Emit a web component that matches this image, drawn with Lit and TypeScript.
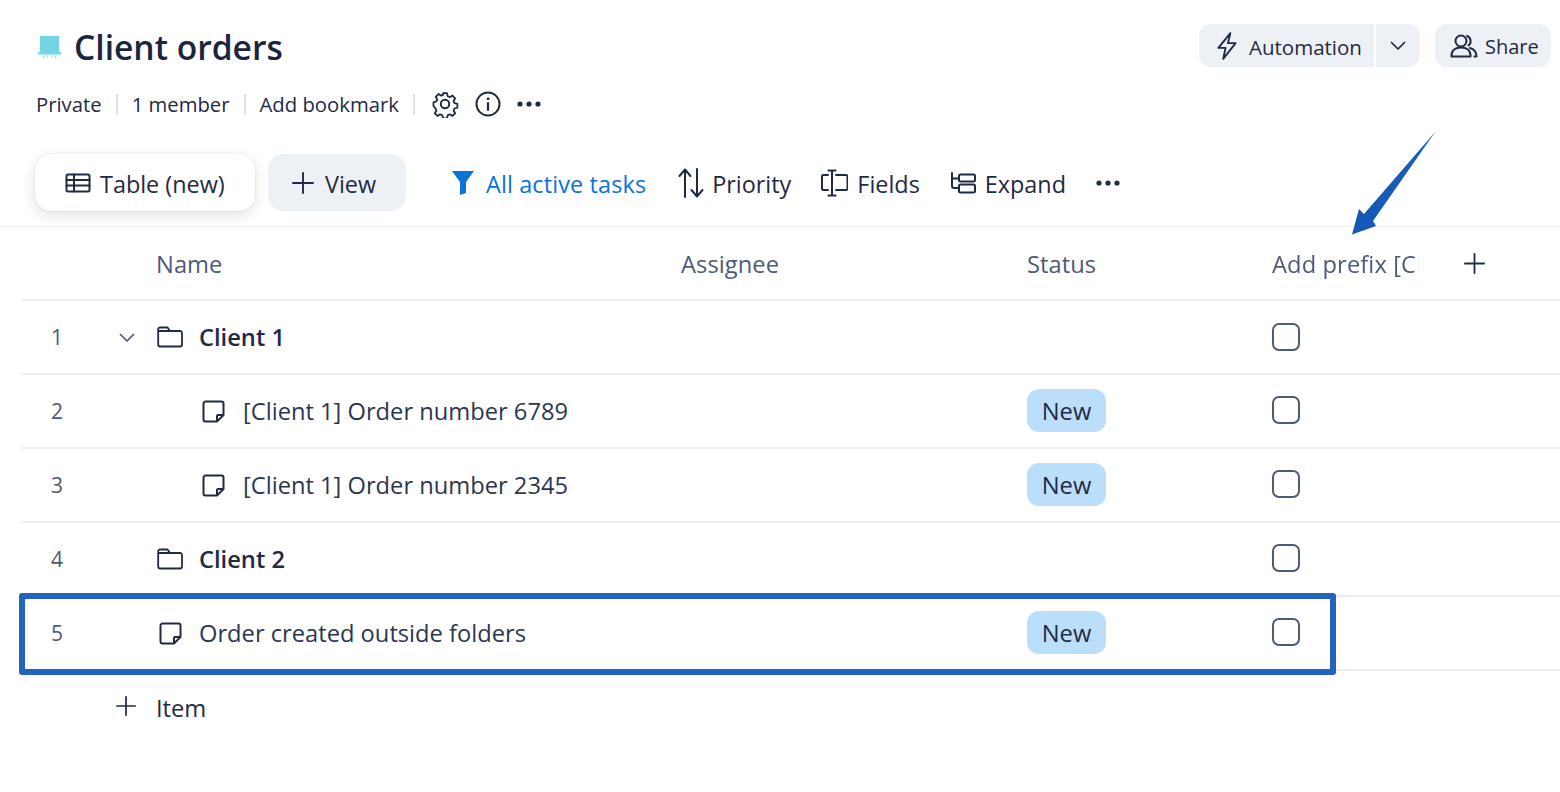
import { LitElement, html, css, svg } from "lit";
import { customElement } from "lit/decorators.js";

const ic = (w: number, h: number, vb: string, body: unknown, cls = "") =>
  html`<svg class="ic ${cls}" width=${w} height=${h} viewBox=${vb} fill="none" stroke="currentColor" stroke-linecap="round" stroke-linejoin="round">${body}</svg>`;

const plus = (s = 22) => ic(s, s, "0 0 22 22", svg`<path d="M11 1v20M1 11h20" stroke-width="1.900"/>`);
const chevron = (w = 16) => ic(w, 10, "0 0 16 10", svg`<path d="M1.500 1.500 8 8l6.500-6.500" stroke-width="1.700"/>`);
const dots = () => html`<svg class="ic" width="24" height="6" viewBox="0 0 24 6" fill="currentColor"><circle cx="3" cy="3" r="2.600"/><circle cx="12" cy="3" r="2.600"/><circle cx="21" cy="3" r="2.600"/></svg>`;
const note = () => ic(23, 23, "0 0 23 23", svg`<path d="M15 21.500H3.500a2 2 0 0 1-2-2V3.500a2 2 0 0 1 2-2h16a2 2 0 0 1 2 2V15ZM21.500 15H16a1 1 0 0 0-1 1v5.500" stroke-width="2"/>`);
const folder = () => ic(26, 22, "0 0 26 22", svg`<path d="M1.200 4V18.500a2 2 0 0 0 2 2H23a2 2 0 0 0 2-2V7a2 2 0 0 0-2-2H13L10.500 1.500H3.200a2 2 0 0 0-2 2.500ZM1.200 5H13" stroke-width="1.800"/>`);
const gear = () => ic(28, 28, "0 0 28 28", svg`<circle cx="14" cy="14" r="4.200" stroke-width="2"/><path d="M11.800 2h4.400l.8 3.400 2.300 1 3-1.800 3 3.100-1.800 3 1 2.200 3.300.9v4.300l-3.300.9-1 2.300 1.800 3-3 3-3-1.800-2.300 1-.8 3.400h-4.400l-.8-3.400-2.300-1-3 1.800-3-3 1.800-3-1-2.300L1.200 16.400v-4.300l3.300-.9 1-2.200-1.800-3 3-3.100 3 1.800 2.300-1Z" stroke-width="2" transform="translate(1.400 1.400) scale(.9)"/>`);

const rows = [
  { n: 1, kind: "folder", name: "Client 1", open: true },
  { n: 2, kind: "note", name: "[Client 1] Order number 6789", status: "New", indent: true },
  { n: 3, kind: "note", name: "[Client 1] Order number 2345", status: "New", indent: true },
  { n: 4, kind: "folder", name: "Client 2" },
  { n: 5, kind: "note", name: "Order created outside folders", status: "New" },
];

@customElement("app-root")
export class AppRoot extends LitElement {
  static styles = css`
    :host { display: block; position: relative; width: 1560px; height: 792px; overflow: hidden; background: #fff; color: #1f2a44;
      font-family: "Open Sans", "Noto Sans", sans-serif; font-size: 23.700px; }
    * { box-sizing: border-box; }
    .ic { display: block; flex: none; }
    .top { display: flex; justify-content: space-between; align-items: flex-start; padding: 24px 9px 0 36px; height: 68px; }
    .title { display: flex; align-items: center; gap: 12px; height: 46px; }
    .title h1 { margin: 0; font-size: 33.600px; font-weight: 600; line-height: 46px; color: #1b2540; }
    .actions { display: flex; gap: 15px; }
    .btn { display: flex; align-items: center; height: 43px; background: #edf0f5; font-size: 20.500px; }
    .btn span { padding-top: 2px; }
    .auto { gap: 11px; padding: 0 0 0 17px; border-radius: 12px 0 0 12px; width: 175px; margin-left: 1px; }
    .caret { width: 44px; justify-content: center; margin-left: 2px; border-radius: 0 12px 12px 0; }
    .split { display: flex; }
    .share { gap: 7px; padding: 0 0 0 15px; border-radius: 12px; width: 116px; font-size: 20px; }
    .meta { display: flex; align-items: center; padding-left: 36px; height: 36px; margin-top: 18px; font-size: 20.300px; }
    .meta .sep { width: 2px; height: 21px; background: #dbe0ea; margin: 0 14px; }
    .meta .tools { display: flex; align-items: center; gap: 16px; margin-left: 2px; }
    .tabs { display: flex; align-items: center; padding: 0 0 0 35px; margin-top: 32px; height: 57px; font-size: 23.400px; }
    .tabs span { padding-top: 2px; }
    .tab { display: flex; align-items: center; height: 57px; border-radius: 16px; }
    .tab.on { width: 220px; gap: 9px; padding-left: 30px; box-shadow: 0 4px 14px rgba(30,40,70,.14), 0 0 2px rgba(30,40,70,.12); }
    .tab.add { width: 138px; gap: 11px; padding-left: 24px; background: #edf0f5; margin-left: 13px; }
    .tool { display: flex; align-items: center; gap: 9px; margin-left: 30px; }
    .filter { color: #0a73db; margin-left: 46px; gap: 12px; letter-spacing: .14px; }
    .tool.prio { margin-left: 32px; gap: 8px; }
    .table { margin-top: 15px; border-top: 1px solid #eff1f5; }
    .row { display: grid; grid-template-columns: 135px 525px 346px 245px 1fr; align-items: center; height: 74px; margin-left: 21px; border-bottom: 2px solid #eceef2; }
    .row.head { color: #4d5b78; padding-top: 2px; letter-spacing: .06px; }
    .prefix { display: flex; align-items: center; }
    .prefix .ic { color: #1f2a44; margin: 0 0 2px 45px; }
    .clip { width: 147px; overflow: hidden; white-space: nowrap; letter-spacing: .1px; -webkit-mask-image: linear-gradient(90deg, #000 96%, transparent); mask-image: linear-gradient(90deg, #000 96%, transparent); }
    .num { display: flex; align-items: center; color: #4d5b78; font-size: 21px; padding-left: 30px; position: relative; height: 100%; }
    .expander { position: absolute; left: 98px; top: 32px; }
    .name { display: flex; align-items: center; gap: 17px; padding-left: 3px; white-space: nowrap; color: #2c3650; }
    .name.folder { gap: 16px; padding-left: 1px; font-weight: 600; color: #1f2a44; }
    .name.indent { padding-left: 46px; gap: 18px; }
    .name .ic { color: #1f2a44; }
    .pill { display: flex; align-items: center; justify-content: center; width: 79px; height: 43px; margin-bottom: 2px; padding-top: 2px; border-radius: 12px; background: #bbdffb; }
    .box { width: 28px; height: 28px; border: 2px solid #4d5b78; border-radius: 7px; }
    .row + .row + .row .box { margin-bottom: 2px; }
    .add-item { display: flex; align-items: center; gap: 20px; padding: 0 0 2px 116px; height: 76px; }
    .add-item .ic { margin-top: -4px; }
    .highlight { position: absolute; left: 19px; top: 593px; width: 1317px; height: 82px; border: 6px solid #2163bf; border-radius: 3px; pointer-events: none; }
    .arrow { position: absolute; left: 1345px; top: 125px; }
  `;

  render() {
    return html`
      <div class="top">
        <div class="title">
          <svg class="ic" width="26" height="26" viewBox="0 0 26 26">
            <rect x="4" y="2" width="19" height="16" fill="#73d4e2"/>
            <rect x="2" y="18" width="23" height="2.500" fill="#73d4e2"/>
            <path d="M9 21 7 24M11.500 21l-.5 2.500M15.500 21l.5 2.500M18 21l2 3" stroke="#a5e3ec" stroke-width="1.400"/>
          </svg>
          <h1>Client orders</h1>
        </div>
        <div class="actions">
          <div class="split">
            <div class="btn auto">
              ${ic(22, 30, "0 0 23 30", svg`<path d="M15 1.500 2.500 17h7.500L7.500 28.500 20.500 12h-8L15 1.500Z" stroke-width="2"/>`)}
              <span>Automation</span>
            </div>
            <div class="btn caret">${chevron()}</div>
          </div>
          <div class="btn share">
            ${ic(28, 24, "0 0 28 24", svg`<circle cx="11" cy="7" r="5.500" stroke-width="2"/><path d="M17 2a5.500 5.500 0 0 1 1.500 9.500M1.500 21.500c0-5 4-8 9.500-8s9.500 3 9.500 8v1h-19v-1ZM20 14c3.500.8 6.300 3.500 6.500 8.500h-2" stroke-width="2"/>`)}
            <span>Share</span>
          </div>
        </div>
      </div>
      <div class="meta">
        <span>Private</span><i class="sep"></i><span>1 member</span><i class="sep"></i><span>Add bookmark</span><i class="sep"></i>
        <div class="tools">
          ${gear()}
          ${ic(26, 26, "0 0 26 26", svg`<circle cx="13" cy="13" r="11.500" stroke-width="2"/><path d="M13 12v7" stroke-width="2.200"/><circle cx="13" cy="7.800" r="1" fill="currentColor" stroke-width="1"/>`)}
          ${dots()}
        </div>
      </div>
      <div class="tabs">
        <div class="tab on">
          ${ic(26, 20, "0 0 26 20", svg`<rect x="1.500" y="1.500" width="23" height="17" rx="1.500" stroke-width="2"/><path d="M1.500 7h23M1.500 12.500h23M9 1.500v17" stroke-width="2"/>`)}
          <span>Table (new)</span>
        </div>
        <div class="tab add">${plus()}<span>View</span></div>
        <div class="tool filter">
          <svg class="ic" width="22" height="24" viewBox="0 0 22 24" fill="currentColor"><path d="M0 0h22l-8 11v11l-6 2V11Z"/></svg>
          <span>All active tasks</span>
        </div>
        <div class="tool prio">
          ${ic(26, 30, "0 0 26 30", svg`<path d="M7 29V2M1.500 8 7 1.500 12.500 8M19 1v27M13.500 22 19 28.500 24.500 22" stroke-width="2"/>`)}
          <span>Priority</span>
        </div>
        <div class="tool">
          ${ic(27, 28, "0 0 27 28", svg`<path d="M7 6H2.500A1.500 1.500 0 0 0 1 7.500v12A1.500 1.500 0 0 0 2.500 21H7M15 6h10a1.500 1.500 0 0 1 1.500 1.500v12A1.500 1.500 0 0 1 25 21H15M11 2v24M7.500 1.500h7M7.500 26.500h7" stroke-width="2"/>`)}
          <span>Fields</span>
        </div>
        <div class="tool">
          ${ic(26, 22, "0 0 26 22", svg`<path d="M2 1v13a2 2 0 0 0 2 2h5M2 6.500h7" stroke-width="2"/><rect x="9" y="2.500" width="16" height="7" rx="1.500" stroke-width="2"/><rect x="9" y="12.500" width="16" height="8" rx="1.500" stroke-width="2"/>`)}
          <span>Expand</span>
        </div>
        <div class="tool">${dots()}</div>
      </div>
      <div class="table">
        <div class="row head">
          <span></span><span>Name</span><span>Assignee</span><span>Status</span>
          <div class="prefix"><div class="clip">Add prefix [Client]</div>${plus(21)}</div>
        </div>
        ${rows.map((r) => html`
          <div class="row">
            <div class="num">${r.n}${r.open ? html`<span class="expander">${chevron()}</span>` : ""}</div>
            <div class="name ${r.kind} ${r.indent ? "indent" : ""}">
              ${r.kind === "folder" ? folder() : note()}<span>${r.name}</span>
            </div>
            <span></span>
            <div>${r.status ? html`<span class="pill">${r.status}</span>` : ""}</div>
            <div class="box"></div>
          </div>`)}
        <div class="add-item">${plus(20)}<span>Item</span></div>
      </div>
      <div class="highlight"></div>
      <svg class="arrow" width="100" height="115" viewBox="0 0 100 115">
        <defs><linearGradient id="ag" x1="1" y1="0" x2="0" y2="1"><stop offset="0" stop-color="#1a5fb8"/><stop offset="1" stop-color="#1557b5"/></linearGradient></defs>
        <path d="M90.500 6.500 19 89 14 84 7 109.500 31 101 28 96Z" fill="url(#ag)"/>
      </svg>
    `;
  }
}
